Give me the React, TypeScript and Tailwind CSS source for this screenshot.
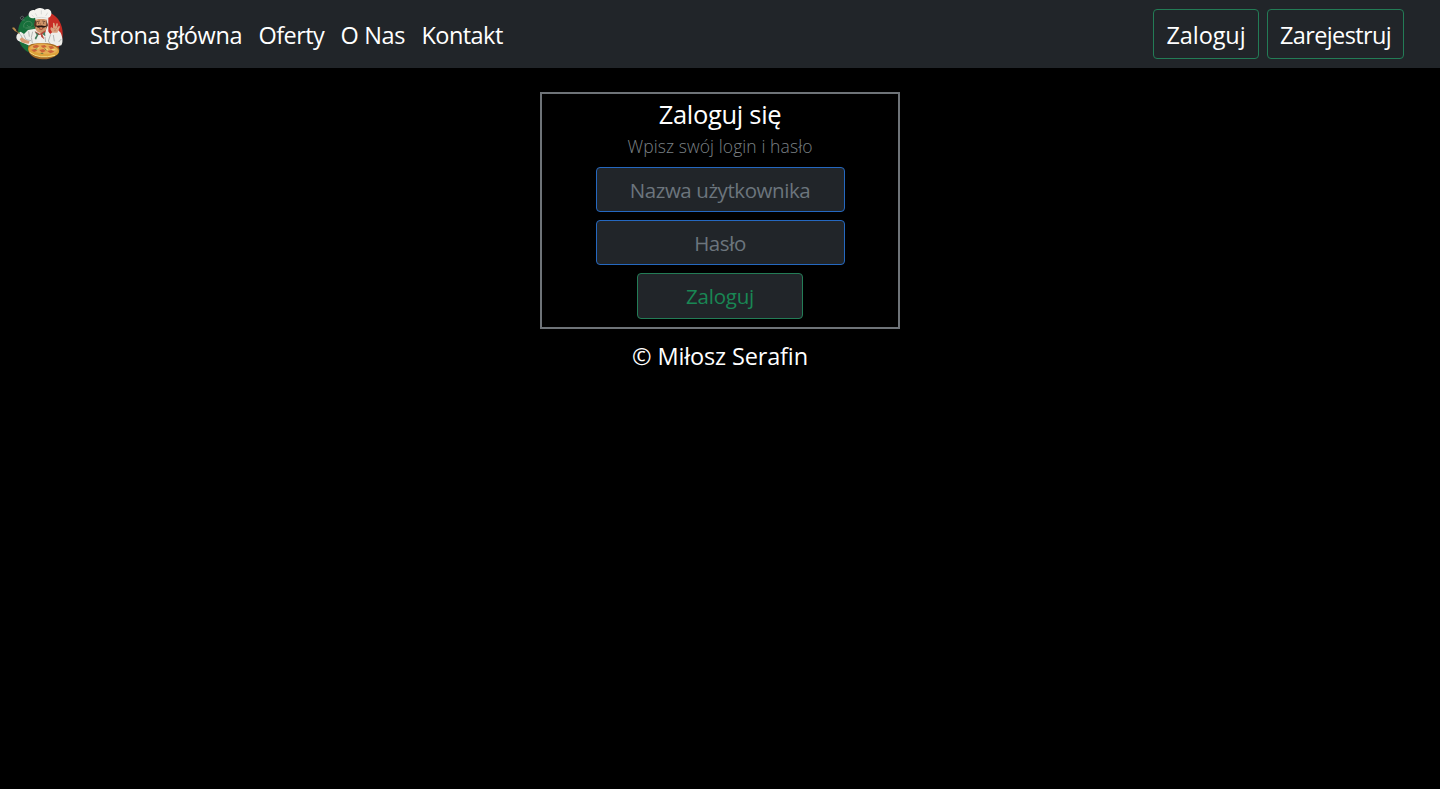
import React from 'react';

function ChefLogo() {
  return (
    <svg className="block h-[52px] w-[52px] shrink-0" viewBox="36 24 156 156" role="img" aria-label="Logo">
      <path d="M108 40C70 44 54 70 54 98C54 124 64 144 84 156L122 150Z" fill="#176f3b" />
      <path d="M135 36C170 38 189 72 188 104C187 126 180 140 168 149L122 150Z" fill="#c72d25" />
      <path d="M110 38H145V110H110Z" fill="#e9e7e1" />
      <g fill="none" strokeWidth="3">
        <path d="M74 60C58 62 58 48 68 49C74 51 70 57 66 55" stroke="#75817b" strokeWidth="2" />
        <path d="M72 83C66 64 92 58 96 71C98 82 82 84 82 75M76 84H102" stroke="#46895c" />
      </g>
      <path d="M106 86L84 90L72 102L62 95L53 101C47 108 48 116 54 122L82 134L94 140H162L184 136C190 126 188 112 182 98L174 90L158 95L151 102L140 89Z" fill="#eeeeea" />
      <path d="M71 103L78 119L93 122M152 103L145 123L151 132M98 95L94 112L97 129M184 117L176 126M61 103L68 115M86 94L88 110M160 105L163 124M135 111L137 126" fill="none" stroke="#b4b8b6" strokeWidth="3" />
      <path d="M106 57H140L142 77C140 92 133 99 123 99C112 98 106 90 104 77Z" fill="#d09468" />
      <path d="M105 60L102 76L108 84L110 65ZM139 60L144 76L139 85Z" fill="#583424" />
      <path d="M110 65L120 63M127 63L136 65" stroke="#4a2b1c" strokeWidth="2" />
      <circle cx="116" cy="69" r="1.7" fill="#24170f" />
      <circle cx="131" cy="69" r="1.7" fill="#24170f" />
      <path d="M122 69L120 77H128" fill="none" stroke="#a86a45" strokeWidth="2" />
      <path d="M122 77C115 76 112 79 107 76C109 84 117 85 123 81C129 86 138 83 141 76C134 80 130 76 122 77Z" fill="#271712" />
      <path d="M117 86Q124 91 130 85" fill="none" stroke="#9c3d2c" strokeWidth="3" />
      <path d="M107 59L105 53C93 59 82 49 87 39C90 31 98 29 104 31C111 22 126 22 134 29C144 23 156 30 154 43C152 52 147 54 141 53L140 59Q124 54 107 59Z" fill="#f5f4f0" />
      <path d="M107 54Q124 50 140 54M106 40L111 49M124 31V43M143 38L137 48M95 45L101 50" fill="none" stroke="#c9ccca" strokeWidth="2" />
      <path d="M104 93L119 101L124 98L138 90L136 98L127 103L133 118L124 111L121 104L112 106Z" fill="#b9463a" />
      <path d="M104 95L116 103L108 119L104 115L110 105ZM135 95L127 102L136 109Z" fill="#427a5a" />
      <path d="M120 103L117 124L124 129L123 107Z" fill="#f3eeee" />
      <path d="M157 98L151 87L153 81L159 85L159 68L163 69L166 80L170 69L174 71L171 84L177 77L180 80L172 98Z" fill="#dca17e" />
      <path d="M160 84L166 88L171 84M162 92H169" fill="none" stroke="#b97658" strokeWidth="2" />
      <path d="M37 84L52 96L59 101" fill="none" stroke="#a37437" strokeWidth="3" />
      <path d="M37 84L42 82L49 90L46 95Z" fill="#b98b4b" />
      <path d="M59 118L65 112L78 120L89 124L86 131L76 130L65 127Z" fill="#d79b73" />
      <path d="M84 142C86 131 105 129 129 130C157 129 177 137 178 149C178 165 158 177 130 178C102 179 83 163 84 142Z" fill="#a76a24" />
      <ellipse cx="131" cy="151" rx="46" ry="20" fill="#dfa33b" transform="rotate(5 131 151)" />
      <ellipse cx="132" cy="147" rx="41" ry="14" fill="#e6ae56" transform="rotate(5 132 147)" />
      <g fill="#cb6238">
        <path d="M98 138L109 134L118 138L112 143L101 144Z" />
        <path d="M122 137L134 135L140 140L129 144Z" />
        <path d="M145 139L157 138L163 144L152 148Z" />
        <path d="M93 149L104 147L112 152L102 156Z" />
        <path d="M118 150L130 147L137 153L126 158Z" />
        <path d="M142 153L155 150L163 155L151 160Z" />
      </g>
      <path d="M109 147L118 143M138 146L144 149M155 149L166 149M89 157Q118 179 165 166" fill="none" stroke="#f2dc83" strokeWidth="3" />
      <path d="M104 149L112 146M133 146L139 151M122 160L130 161" stroke="#74823b" strokeWidth="3" />
    </svg>
  );
}

const links = [
  { label: 'Strona główna', size: 'w-[152.5px] tracking-[-0.38px]' },
  { label: 'Oferty', size: 'w-[66px] tracking-[-0.58px]' },
  { label: 'O Nas', size: 'w-[65px] tracking-[-0.32px]' },
  { label: 'Kontakt', size: 'w-[82px] tracking-[-0.55px]' },
];

const inputClass =
  'mb-2 h-[45px] w-[249px] rounded border border-[#2568c0] bg-[#212529] text-center text-[20.5px] tracking-[-0.42px] outline-none placeholder:text-[#6c757d]';

export default function App() {
  return (
    <div className="min-h-[789px] bg-black font-['Open_Sans',sans-serif] text-[23.5px] leading-9 text-white">
      <header className="flex h-[68px] items-center bg-[#212529] pr-9 pl-3">
        <ChefLogo />
        <nav className="ml-[26px] flex gap-4 pt-0.5">
          {links.map((link) => (
            <a key={link.label} href="#" className={`whitespace-nowrap ${link.size}`}>
              {link.label}
            </a>
          ))}
        </nav>
        <div className="ml-auto flex gap-2">
          <button className="h-[50px] w-[106px] rounded border border-[#237c56] pt-0.5 tracking-[-0.1px] whitespace-nowrap">Zaloguj</button>
          <button className="h-[50px] w-[137px] rounded border border-[#237c56] pt-0.5 tracking-[-0.62px] whitespace-nowrap">Zarejestruj</button>
        </div>
      </header>

      <main className="flex flex-col items-center pt-6">
        <form className="flex h-[237px] w-[360px] flex-col items-center border-2 border-[#6e7378] pt-0.5" onSubmit={(e) => e.preventDefault()}>
          <h1 className="h-[38px] text-[25.5px] leading-9 tracking-[-0.3px]">Zaloguj się</h1>
          <p className="mb-2 h-[25px] text-[17.5px] leading-[25px] font-light tracking-[0.09px] text-[#7b8085]">Wpisz swój login i hasło</p>
          <input type="text" placeholder="Nazwa użytkownika" className={inputClass} />
          <input type="password" placeholder="Hasło" className={inputClass} />
          <button type="submit" className="h-[46px] w-[166px] rounded border border-[#237c56] bg-[#212529] text-[20.5px] tracking-[-0.2px] text-[#198754]">Zaloguj</button>
        </form>
        <footer className="mt-[9px] tracking-[-0.14px]">© Miłosz Serafin</footer>
      </main>
    </div>
  );
}
